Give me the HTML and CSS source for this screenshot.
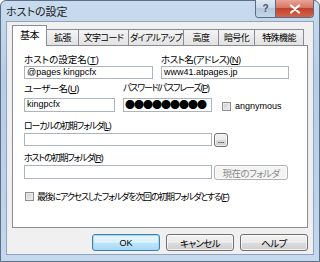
FILE: index.html
```html
<!DOCTYPE html>
<html lang="ja">
<head>
  <meta charset="UTF-8" />
  <title>ホストの設定</title>
  <link rel="stylesheet" href="styles.css">
</head>
<body>
  <div class="window">
    <div class="titlebar">
      <span class="title">ホストの設定</span>
      <div class="caption">
        <span class="cap-help">?</span>
        <span class="cap-close">
          <svg width="12" height="10" viewBox="0 0 12 10"><path d="M2 1.5 L10 8.5 M10 1.5 L2 8.5" stroke="#fff" stroke-width="2.2" stroke-linecap="round"/></svg>
        </span>
      </div>
    </div>

    <div class="client">
      <div class="tabs">
        <span class="tab active">基本</span>
        <span class="tab">拡張</span>
        <span class="tab">文字コード</span>
        <span class="tab">ダイアルアップ</span>
        <span class="tab">高度</span>
        <span class="tab">暗号化</span>
        <span class="tab">特殊機能</span>
      </div>

      <div class="panel">
        <div class="row row1">
          <div class="field w-host">
            <label>ホストの設定名(<u>T</u>)</label>
            <div class="textbox">@pages kingpcfx</div>
          </div>
          <div class="field w-addr">
            <label class="tight1">ホスト名(アドレス)(<u>N</u>)</label>
            <div class="textbox">www41.atpages.jp</div>
          </div>
        </div>

        <div class="row row2">
          <div class="field w-user">
            <label class="tight1">ユーザー名(<u>U</u>)</label>
            <div class="textbox">kingpcfx</div>
          </div>
          <div class="field w-pass">
            <label class="narrow">パスワード/パスフレーズ(<u>P</u>)</label>
            <div class="textbox pass">●●●●●●●●●</div>
          </div>
          <div class="check anon">
            <span class="box"></span>
            <span>angnymous</span>
          </div>
        </div>

        <div class="block row3">
          <label class="narrow">ローカルの初期フォルダ(<u>L</u>)</label>
          <div class="line">
            <div class="textbox w-long"></div>
            <span class="btn small">...</span>
          </div>
        </div>

        <div class="block row4">
          <label class="narrow">ホストの初期フォルダ(<u>R</u>)</label>
          <div class="line">
            <div class="textbox w-long"></div>
            <span class="btn disabled">現在のフォルダ</span>
          </div>
        </div>

        <div class="check row5">
          <span class="box"></span>
          <span class="narrow">最後にアクセスしたフォルダを次回の初期フォルダとする(<u>F</u>)</span>
        </div>
      </div>

      <div class="actions">
        <span class="btn default">OK</span>
        <span class="btn tight1">キャンセル</span>
        <span class="btn tight1">ヘルプ</span>
      </div>
    </div>
  </div>
</body>
</html>
```

FILE: styles.css
```css
* {
  box-sizing: border-box;
}
body {
  margin: 0;
  font-family: "Liberation Sans", "Noto Sans CJK JP", sans-serif;
  font-size: 9.5px;
  font-feature-settings: "palt";
  color: #000;
}
.window {
  width: 320px;
  height: 262px;
  display: flex;
  flex-direction: column;
  padding: 0 5px 6px;
  border: 1px solid #5d6f86;
  border-radius: 6px 6px 0 0;
  background: linear-gradient(to bottom, #c9dbee 0%, #b6cde6 30%, #bcd2ea 70%, #c4d8ee 100%);
}
.titlebar {
  height: 20px;
  display: flex;
  align-items: flex-start;
}
.title {
  font-family: "Noto Sans CJK JP", sans-serif;
  font-size: 11px;
  line-height: 14px;
  padding-top: 3px;
  color: #1a1a1a;
}
.caption {
  margin-left: auto;
  margin-top: -1px;
  display: flex;
  height: 18px;
  border: 1px solid #5c6c82;
  border-top: none;
  border-radius: 0 0 4px 4px;
  overflow: hidden;
}
.cap-help {
  width: 20px;
  display: flex;
  align-items: center;
  justify-content: center;
  font-size: 10px;
  font-weight: bold;
  color: #4b5566;
  background: linear-gradient(to bottom, #dfe8f3 0%, #c7d6e8 50%, #b4c6dc 50%, #c5d6e8 100%);
  border-right: 1px solid #5c6c82;
}
.cap-close {
  width: 37px;
  display: flex;
  align-items: center;
  justify-content: center;
  background: linear-gradient(to bottom, #e8a397 0%, #d7715f 50%, #c3402b 50%, #d2654c 100%);
}
.client {
  flex: 1;
  display: flex;
  flex-direction: column;
  background: #f0f0f0;
  border: 1px solid #91a4bc;
  padding: 3px 5px 0 5px;
}
.tabs {
  display: flex;
  align-items: flex-end;
  height: 20px;
  font-family: "Noto Sans CJK JP", sans-serif;
  font-size: 9px;
  letter-spacing: -0.6px;
}
.tab {
  flex-shrink: 0;
  height: 16px;
  line-height: 15px;
  border: 1px solid #898c95;
  border-bottom: none;
  margin-right: -1px;
  background: linear-gradient(to bottom, #f4f4f4, #e2e2e2);
  text-align: center;
  white-space: nowrap;
}
.tab:nth-child(1) { width: 35px; }
.tab:nth-child(2) { width: 33px; }
.tab:nth-child(3) { width: 51px; }
.tab:nth-child(4) { width: 56px; }
.tab:nth-child(5) { width: 36px; }
.tab:nth-child(6) { width: 37px; }
.tab:nth-child(7) { width: 50px; }
.tab.active {
  height: 21px;
  margin-bottom: -1px;
  line-height: 18px;
  font-size: 10px;
  background: #fff;
  position: relative;
  z-index: 1;
}
.panel {
  height: 183px;
  background: #fff;
  border: 1px solid #898c95;
  padding: 7px 0 0 11px;
}
label {
  display: block;
  height: 13px;
  line-height: 13px;
  white-space: nowrap;
}
.tight1 { letter-spacing: -0.6px; }
.narrow {
  font-size: 9px;
  letter-spacing: -1.2px;
}
.row {
  display: flex;
  gap: 8px;
}
.textbox {
  height: 13px;
  border: 1px solid #abb3bd;
  background: #fff;
  padding-left: 2px;
  font-size: 9px;
  line-height: 11px;
  white-space: nowrap;
  overflow: hidden;
}
.w-host { width: 129px; }
.w-addr { width: 128px; }
.row2 { margin-top: 3px; }
.row2 label { margin-bottom: 3px; }
.w-user { width: 91px; }
.w-pass { width: 89px; }
.row2 .textbox { height: 14px; }
.textbox.pass {
  font-family: "Noto Sans CJK JP", sans-serif;
  font-size: 10px;
  line-height: 12px;
  letter-spacing: -1px;
  padding-left: 1px;
}
.check {
  display: flex;
  align-items: center;
  gap: 4px;
  white-space: nowrap;
}
.check .box {
  flex-shrink: 0;
  width: 9px;
  height: 9px;
  border: 1px solid #8f8f8f;
  background: linear-gradient(135deg, #cfcfcf, #f0f0f0);
  box-shadow: inset 0 0 0 1px #e8e8e8;
}
.anon {
  margin-left: 2px;
  margin-top: 19px;
  font-size: 9px;
  align-self: flex-start;
}
.block .line {
  display: flex;
  gap: 2px;
}
.w-long { width: 188px; }
.row3 { margin-top: 8px; }
.row4 { margin-top: 5px; }
.row4 .textbox { height: 14px; }
.row5 {
  margin-top: 10px;
  margin-left: 1px;
  gap: 3px;
}
.btn {
  display: flex;
  align-items: center;
  justify-content: center;
  height: 17px;
  width: 68px;
  border: 1px solid #707070;
  border-radius: 3px;
  background: linear-gradient(to bottom, #f2f2f2 0%, #ebebeb 50%, #dddddd 50%, #cfcfcf 100%);
  box-shadow: inset 0 0 0 1px rgba(255, 255, 255, 0.7);
  font-family: "Noto Sans CJK JP", sans-serif;
  font-size: 9.5px;
  white-space: nowrap;
}
.btn.small {
  width: 14px;
  height: 14px;
  font-size: 8px;
  line-height: 8px;
  align-items: flex-end;
  padding-bottom: 2px;
  letter-spacing: 0;
}
.btn.disabled {
  width: 74px;
  height: 15px;
  color: #8a8a8a;
  border-color: #adb2b5;
  background: #f4f4f4;
  letter-spacing: -0.6px;
}
.btn.default {
  border-color: #3c7fb1;
  box-shadow: inset 0 0 0 1px #a7d8f5;
  background: linear-gradient(to bottom, #eaf6fd 0%, #d9f0fc 50%, #bee6fd 50%, #a7d9f5 100%);
  font-family: "Liberation Sans", sans-serif;
  font-size: 9px;
}
.actions {
  display: flex;
  justify-content: flex-end;
  gap: 6px;
  margin-top: 6px;
}
```
